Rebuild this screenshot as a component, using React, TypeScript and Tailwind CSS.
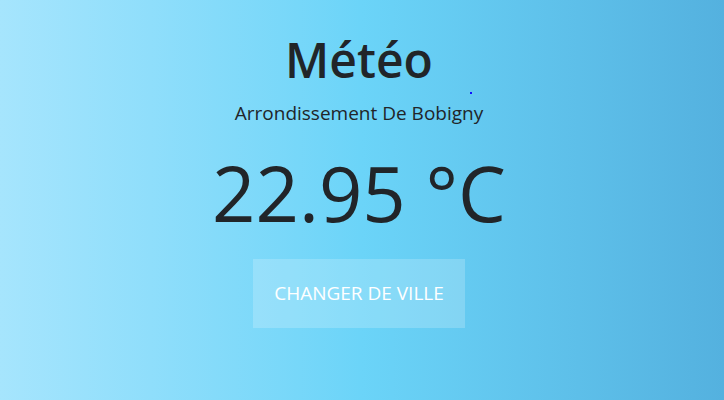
export default function App() {
  return (
    <div
      className="relative w-full h-[400px] overflow-hidden bg-gradient-to-r from-[#a6e5fd] via-[#6bd4f8] to-[#54b1df] text-[#212529]"
      style={{ fontFamily: '"Open Sans", "Noto Sans", sans-serif' }}
    >
      <div className="flex flex-col items-center pt-[28px] pr-[6px]">
        <h1 className="text-[48px] leading-[64px] font-semibold">Météo</h1>
        <p className="mt-[8px] text-[19px] leading-[26px]">Arrondissement De Bobigny</p>
        <div className="mt-[17px] text-[76px] leading-[100px] font-normal">22.95 °C</div>
        <button className="mt-[16px] w-[212px] h-[69px] bg-white/20 text-white text-[19px] uppercase">
          Changer de ville
        </button>
      </div>
      <div className="absolute left-[470px] top-[92px] w-[2px] h-[2px] bg-[#1010ff]" />
    </div>
  );
}
